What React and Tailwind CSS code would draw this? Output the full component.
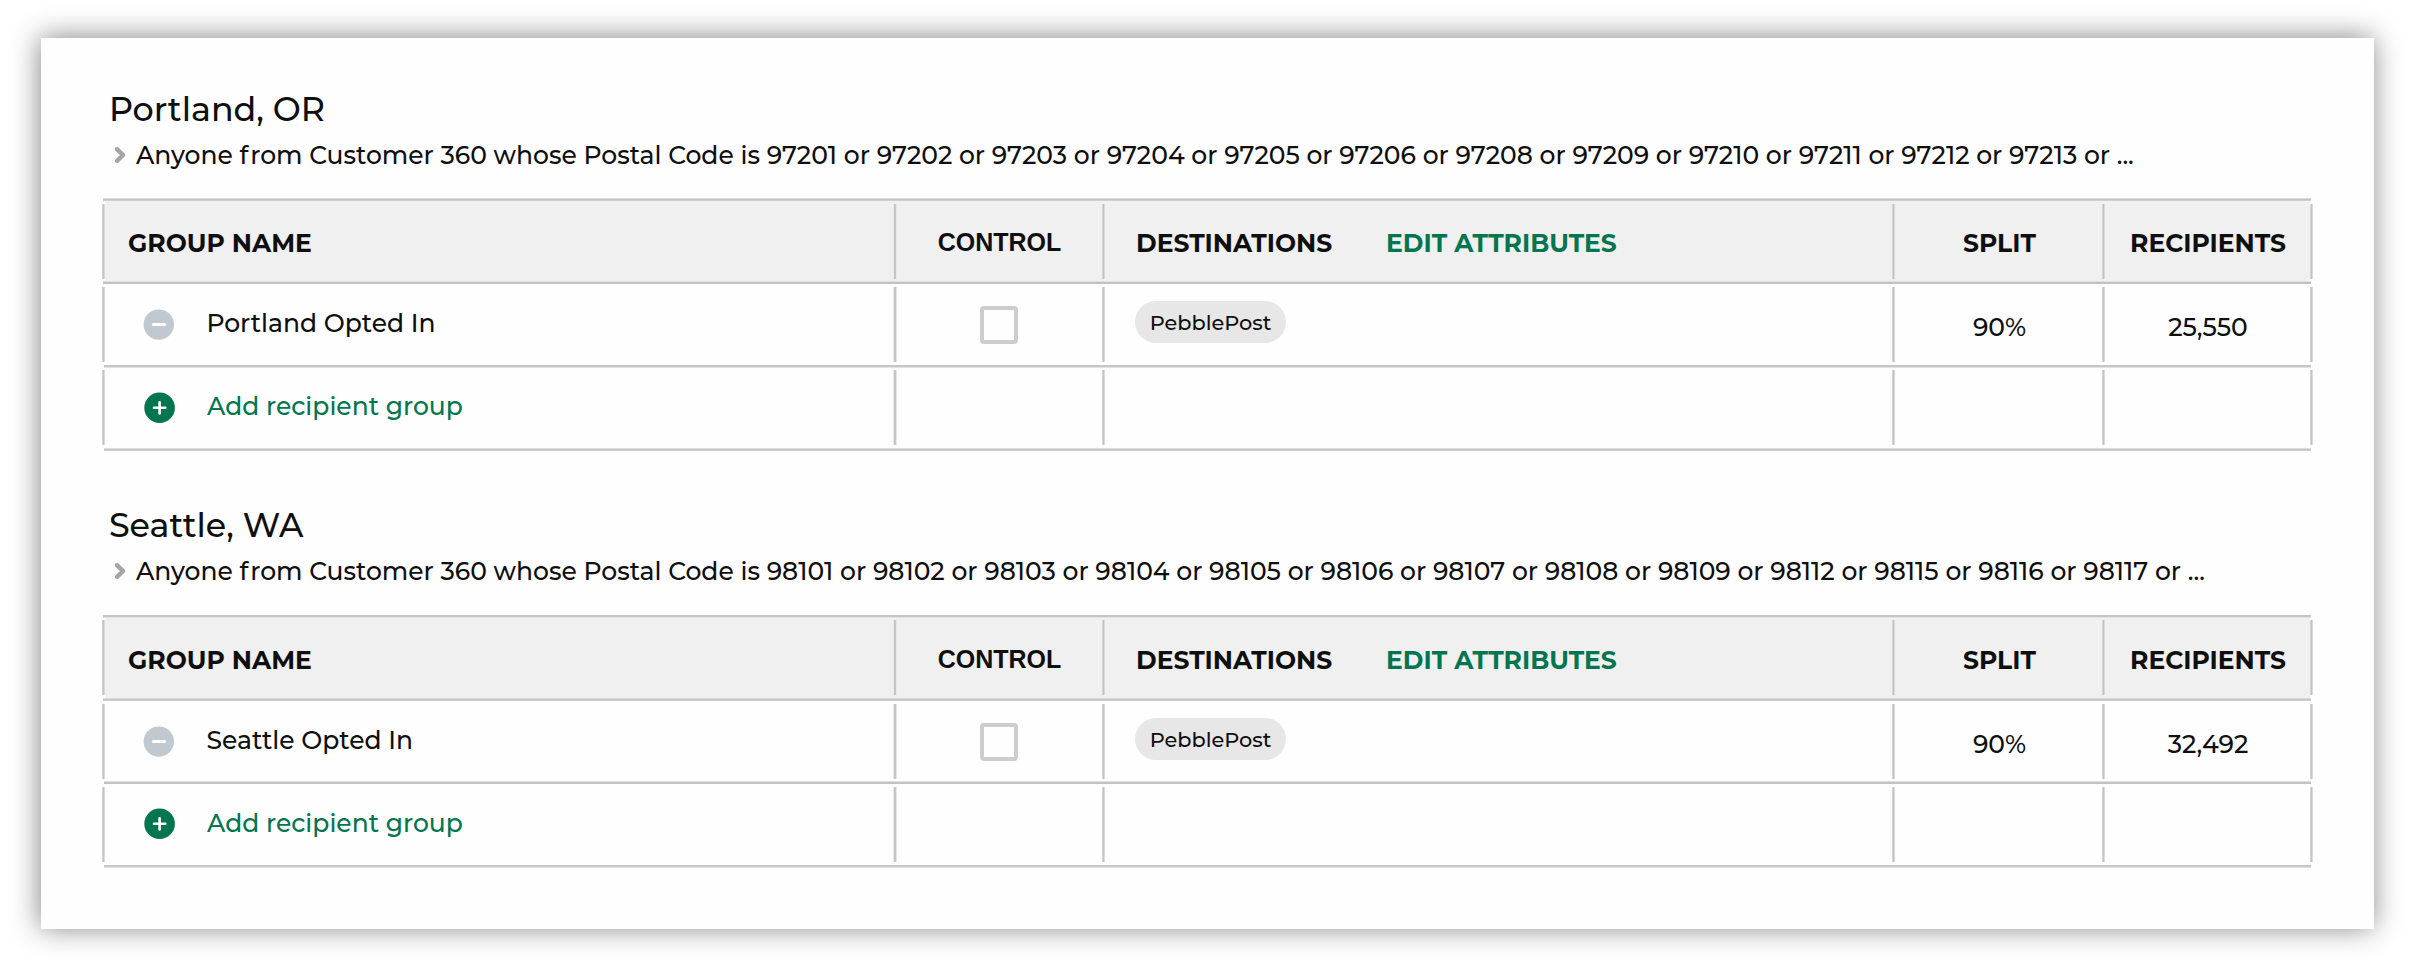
const SECTIONS = [
  {
    title: "Portland, OR",
    codes:
      "97201 or 97202 or 97203 or 97204 or 97205 or 97206 or 97208 or 97209 or 97210 or 97211 or 97212 or 97213 or ...",
    group: "Portland Opted In",
    recipients: "25,550",
    titleMargin: "",
    filterMargin: "mt-[11px] mb-7",
    lines: ["center", "bottom", "top", "center"],
    heights: ["h-[80px]", "h-[81px]", "h-[80px]"],
    dividers: ["mt-[3px]", "mt-[3px]", "mt-[2px]"],
    addPadding: "pt-[23px]",
    plusPadding: "pt-[24px]",
  },
  {
    title: "Seattle, WA",
    codes:
      "98101 or 98102 or 98103 or 98104 or 98105 or 98106 or 98107 or 98108 or 98109 or 98112 or 98115 or 98116 or 98117 or ...",
    group: "Seattle Opted In",
    recipients: "32,492",
    titleMargin: "mt-[54px]",
    filterMargin: "mt-[11px] mb-[29px]",
    lines: ["top", "center", "bottom", "top"],
    heights: ["h-[80px]", "h-[80px]", "h-[81px]"],
    dividers: ["mt-[2px]", "mt-[3px]", "mt-[3px]"],
    addPadding: "pt-6",
    plusPadding: "pt-6",
  },
];

const LINE = {
  top: "bg-[linear-gradient(180deg,#c6c6c6_2px,#e2e2e2_2px)]",
  center: "bg-[linear-gradient(180deg,#dcdcdc_1px,#c3c3c3_1px,#c3c3c3_2px,#d0d0d0_2px)]",
  bottom: "bg-[linear-gradient(180deg,#e0e0e0_1px,#c2c2c2_1px)]",
};

function HLine({ kind, indent }) {
  return <div className={`h-[3px] mr-[2px] ${indent ? "ml-[2px]" : "ml-px"} ${LINE[kind]}`} />;
}

function VLine({ margin, wide }) {
  return (
    <div
      className={`h-[75px] shrink-0 ${margin} ${
        wide
          ? "w-1 bg-[linear-gradient(90deg,#e8e8e8_1px,#c6c6c6_1px,#c6c6c6_3px,#e8e8e8_3px)]"
          : "w-[3px] bg-[linear-gradient(90deg,#d6d6d6_1px,#c2c2c2_1px,#c2c2c2_2px,#dadada_2px)]"
      }`}
    />
  );
}

function Row({ height, divider, header, cells }) {
  return (
    <div className={`flex ${height}`}>
      <VLine margin={divider} />
      <div className={`flex w-[2205px] ${header ? "bg-[#f0f0f0] font-bold" : ""}`}>
        <div className="flex w-[788px] items-start">{cells[0]}</div>
        <VLine margin={divider} wide />
        <div className="flex w-[205px] items-start justify-center">{cells[1]}</div>
        <VLine margin={divider} />
        <div className="flex w-[787px] items-start pl-[30px]">{cells[2]}</div>
        <VLine margin={divider} />
        <div className="flex w-[207px] items-start justify-center pl-[2px]">{cells[3]}</div>
        <VLine margin={divider} />
        <div className="flex w-[205px] items-start justify-center pl-px">{cells[4]}</div>
      </div>
      <VLine margin={divider} />
    </div>
  );
}

function MinusIcon() {
  return (
    <svg className="h-8 w-8" viewBox="0 0 32 32" fill="none">
      <circle cx="15.8" cy="15.6" r="15.2" fill="#c1c9d0" />
      <path d="M10.4 15.6H21.6" stroke="#fff" strokeWidth="3" strokeLinecap="round" />
    </svg>
  );
}

function PlusIcon() {
  return (
    <svg className="h-8 w-8" viewBox="0 0 32 32" fill="none">
      <circle cx="16.6" cy="15.8" r="15.3" fill="#03754f" />
      <path d="M11 15.8H22.2M16.6 10.2V21.4" stroke="#fff" strokeWidth="2.6" strokeLinecap="round" />
    </svg>
  );
}

function Chevron() {
  return (
    <svg className="h-4 w-[11px]" viewBox="0 0 11 16" fill="none">
      <path d="M2 2.2L8 8L2 13.8" stroke="#a6a6a6" strokeWidth="4.4" strokeLinecap="round" strokeLinejoin="round" />
    </svg>
  );
}

function Section({ s }) {
  return (
    <section className={s.titleMargin}>
      <h2 className="pl-[6.9px] text-[33.33px] leading-[40px]">{s.title}</h2>
      <div className={`flex items-center pl-[13px] whitespace-nowrap ${s.filterMargin}`}>
        <Chevron />
        <p className="pl-[10px]">
          Anyone <span className="tracking-[1.9px]">f</span>rom Customer 360 whose Postal Code is {s.codes}
        </p>
      </div>
      <div className="w-[2211px]">
        <HLine kind={s.lines[0]} />
        <Row
          header
          height={s.heights[0]}
          divider={s.dividers[0]}
          cells={[
            <span className="pt-[27px] pl-[23px]">GROUP NAME</span>,
            <span className="pt-[26px] font-['Liberation_Sans',sans-serif]">CONTROL</span>,
            <div className="flex pt-[27px] pl-px">
              <span className="w-[250px]">DESTINATIONS</span>
              <span className="text-[#03754f]">EDIT ATTRIBUTES</span>
            </div>,
            <span className="pt-[27px]">SPLIT</span>,
            <span className="pt-[27px]">RECIPIENTS</span>,
          ]}
        />
        <HLine kind={s.lines[1]} />
        <Row
          height={s.heights[1]}
          divider={s.dividers[1]}
          cells={[
            <div className="flex items-start pl-[38px]">
              <div className="pt-[25px]">
                <MinusIcon />
              </div>
              <span className="pt-6 pl-[31.5px]">{s.group}</span>
            </div>,
            <div className="mt-[22px] mr-px h-[38px] w-[38px] rounded-[4px] border-4 border-[#cdcdcd]" />,
            <span className="mt-[17px] h-[42px] w-[151px] rounded-full bg-[#e7e7e7] text-center text-[20.83px] leading-[43px]">
              PebblePost
            </span>,
            <span className="pt-7">90%</span>,
            <span className="pt-7">{s.recipients}</span>,
          ]}
        />
        <HLine kind={s.lines[2]} indent />
        <Row
          height={s.heights[2]}
          divider={s.dividers[2]}
          cells={[
            <div className="flex items-start pl-[38px] text-[#03754f]">
              <div className={s.plusPadding}>
                <PlusIcon />
              </div>
              <span className={`pl-[32px] ${s.addPadding}`}>Add recipient group</span>
            </div>,
          ]}
        />
        <HLine kind={s.lines[3]} indent />
      </div>
    </section>
  );
}

export default function App() {
  return (
    <div className="h-[968px] w-[2414px] overflow-hidden bg-white pt-[38px] pl-[41px] font-['Montserrat',sans-serif] text-[25px] leading-[30px] font-medium text-[#0f0f0f]">
      <main className="flex h-[891px] w-[2333px] flex-col bg-[#fefefe] pt-[51px] pl-[61px] shadow-[-1px_-1px_27px_rgba(0,0,0,0.48)]">
        {SECTIONS.map((s) => (
          <Section key={s.title} s={s} />
        ))}
      </main>
    </div>
  );
}
